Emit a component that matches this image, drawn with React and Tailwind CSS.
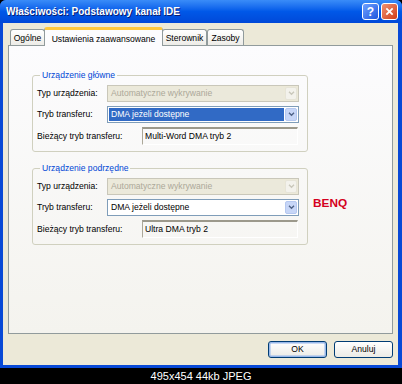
import React from 'react';

function Chevron({ disabled }) {
  return (
    <svg viewBox="0 0 8 6" className="w-[7px] h-[5px]">
      <path d="M1 1l3 3 3-3" fill="none" stroke={disabled ? '#C9C7BA' : '#4D6185'} strokeWidth="1.6" />
    </svg>
  );
}

function Combo({ text, variant }) {
  // variant: disabled | selected | normal
  const disabled = variant === 'disabled';
  return (
    <div
      className={
        'w-[192px] h-[17px] flex items-stretch border p-[1px] ' +
        (disabled ? 'border-[#C9C7BA] bg-[#ECE9D8]' : 'border-[#7F9DB9] bg-white')
      }
    >
      <div
        className={
          'flex-1 flex items-center pl-[2px] text-[8.6px] ' +
          (disabled ? 'text-[#ACA899] bg-[#EBE9DB]' : variant === 'selected' ? 'bg-[#316AC5] text-white' : 'text-black')
        }
      >
        {text}
      </div>
      <div
        className={
          'w-[12px] ml-[1px] flex items-center justify-center rounded-[2px] border ' +
          (disabled ? 'border-[#E6E4D8] bg-[#F3F2EC]' : 'border-[#B5C8F0] bg-[#C7D6F7]')
        }
      >
        <Chevron disabled={disabled} />
      </div>
    </div>
  );
}

function Group({ title, current, selected }) {
  return (
    <fieldset className="w-[276px] border border-[#D0D0BF] rounded-[3px] pl-[4px] pt-[4px] pb-[6px]">
      <legend className="ml-[3px] px-[2px] text-[8.6px] leading-[12px] text-[#0046D5]">{title}</legend>
      <div className="flex flex-col gap-[4px]">
        <div className="flex items-center h-[17px]">
          <span className="w-[70px] text-[8.6px]">Typ urządzenia:</span>
          <Combo text="Automatyczne wykrywanie" variant="disabled" />
        </div>
        <div className="flex items-center h-[17px]">
          <span className="w-[70px] text-[8.6px]">Tryb transferu:</span>
          <Combo text="DMA jeżeli dostępne" variant={selected ? 'selected' : 'normal'} />
        </div>
        <div className="flex items-center h-[18px]">
          <span className="w-[105px] text-[8.6px]">Bieżący tryb transferu:</span>
          <div className="w-[156px] h-[18px] flex items-center pl-[2px] text-[8.6px] border-t-2 border-l border-t-[#9C998C] border-l-[#ACA899] border-r border-b border-r-white border-b-white">
            {current}
          </div>
        </div>
      </div>
    </fieldset>
  );
}

function Tab({ label, active, width }) {
  if (active) {
    return (
      <div className={'h-[19px] -mx-[1px] relative z-10 flex justify-center pt-[3px] bg-[#FCFCFE] border-x border-[#919B9C] border-t-[3px] border-t-[#FFC83C] rounded-t-[3px] text-[8.6px] ' + width}>
        {label}
      </div>
    );
  }
  return (
    <div className={'h-[17px] flex items-center justify-center bg-linear-to-b from-white to-[#ECEBE6] border border-b-0 border-[#919B9C] rounded-t-[3px] text-[8.6px] ' + width}>
      {label}
    </div>
  );
}

function Button({ label, focused }) {
  return (
    <div
      className={
        'w-[59px] h-[17px] flex items-center justify-center rounded-[3px] border border-[#003C74] text-[8.6px] bg-linear-to-b from-white to-[#ECEBE6] ' +
        (focused ? 'shadow-[inset_0_0_0_1.5px_#98B8EA]' : '')
      }
    >
      {label}
    </div>
  );
}

export default function App() {
  return (
    <div className="w-[402px] h-[384px] bg-black flex flex-col font-['Liberation_Sans',Arial,sans-serif] text-black">
      <div className="h-[368px] flex flex-col bg-[#0849D6] rounded-t-[6px] overflow-hidden">
        <div className="h-[23px] flex items-center justify-between pl-[6px] pr-[4px] bg-linear-to-b from-[#3A8CF8] via-[#0058E8] to-[#0048D8]">
          <span className="text-white font-bold text-[10px] [text-shadow:1px_1px_0_#0A1E70]">
            Właściwości: Podstawowy kanał IDE
          </span>
          <div className="flex gap-[2px]">
            <div className="w-[17px] h-[17px] rounded-[3px] border border-white bg-linear-to-br from-[#6FA0FF] to-[#1F55DD] flex items-center justify-center text-white font-bold text-[12px]">
              ?
            </div>
            <div className="w-[17px] h-[17px] rounded-[3px] border border-white bg-linear-to-br from-[#F09070] to-[#CF3A10] flex items-center justify-center">
              <svg viewBox="0 0 10 10" className="w-[9px] h-[9px]">
                <path d="M1.5 1.5l7 7M8.5 1.5l-7 7" stroke="white" strokeWidth="2" />
              </svg>
            </div>
          </div>
        </div>
        <div className="flex-1 flex flex-col ml-[3px] mr-[4px] mb-[3px] bg-[#ECE9D8]">
          <div className="h-[19px] mt-[4px] flex items-end pl-[7px]">
            <Tab label="Ogólne" width="w-[35px]" />
            <Tab label="Ustawienia zaawansowane" width="w-[119px]" active />
            <Tab label="Sterownik" width="w-[45px]" />
            <Tab label="Zasoby" width="w-[37px]" />
          </div>
          <div className="mx-[5px] h-[289px] -mt-px border border-[#919B9C] bg-linear-to-b from-[#FCFCFE] to-[#F4F3EE] pl-[23px] pt-[23px] flex flex-col">
            <Group title="Urządzenie główne" current="Multi-Word DMA tryb 2" selected />
            <div className="flex items-center gap-[5px] mt-[10px]">
              <Group title="Urządzenie podrzędne" current="Ultra DMA tryb 2" />
              <span className="text-[#D40020] font-bold text-[11.8px]">BENQ</span>
            </div>
          </div>
          <div className="flex justify-end gap-[7px] pr-[5px] mt-[7px]">
            <Button label="OK" focused />
            <Button label="Anuluj" />
          </div>
        </div>
      </div>
      <div className="flex-1 flex items-center justify-center text-white text-[11px]">495x454 44kb JPEG</div>
    </div>
  );
}
